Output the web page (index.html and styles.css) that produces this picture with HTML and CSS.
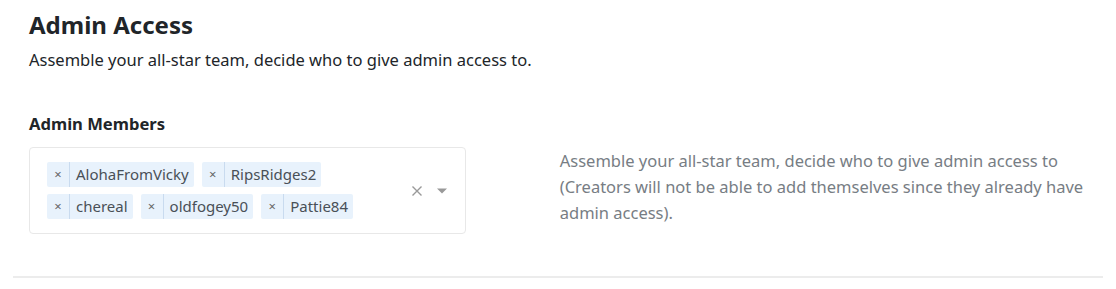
FILE: index.html
```html
<!DOCTYPE html>
<html lang="en">
<head>
    <meta charset="UTF-8">
    <meta name="viewport" content="width=device-width, initial-scale=1.0">
    <title>Admin Access</title>
    <link rel="stylesheet" href="styles.css">
</head>
<body>
    <div class="section">
        <h1>Admin Access</h1>
        <p class="subtitle">Assemble your all-star team, decide who to give admin access to.</p>

        <div class="field">
            <div class="field-main">
                <label class="field-label">Admin Members</label>
                <div class="select">
                    <div class="tags">
                        <span class="tag"><span class="tag-remove">&times;</span><span class="tag-label">AlohaFromVicky</span></span>
                        <span class="tag"><span class="tag-remove">&times;</span><span class="tag-label">RipsRidges2</span></span>
                        <span class="tag"><span class="tag-remove">&times;</span><span class="tag-label">chereal</span></span>
                        <span class="tag"><span class="tag-remove">&times;</span><span class="tag-label">oldfogey50</span></span>
                        <span class="tag"><span class="tag-remove">&times;</span><span class="tag-label">Pattie84</span></span>
                    </div>
                    <div class="indicators">
                        <svg class="clear-icon" width="12" height="12" viewBox="0 0 12 12">
                            <path d="M1.5 1.5 L10.5 10.5 M10.5 1.5 L1.5 10.5" stroke="#999" stroke-width="1.4" fill="none"/>
                        </svg>
                        <svg class="arrow-icon" width="12" height="8" viewBox="0 0 12 8">
                            <path d="M1 1.5 L11 1.5 L6 6.5 Z" fill="#999"/>
                        </svg>
                    </div>
                </div>
            </div>
            <p class="field-help">Assemble your all-star team, decide who to give admin access to (Creators will not be able to add themselves since they already have admin access).</p>
        </div>

        <hr class="divider">
    </div>
</body>
</html>
```

FILE: styles.css
```css
body {
    margin: 0;
    font-family: "Noto Sans", "Open Sans", sans-serif;
    color: #212529;
    background-color: #fff;
}

.section {
    padding: 8px 13px 0 13px;
}

h1 {
    margin: 0 16px;
    font-size: 24px;
    font-weight: 700;
    line-height: 34px;
}

.subtitle {
    margin: 6px 16px 0 16px;
    font-size: 16.5px;
    line-height: 24px;
}

.field {
    display: flex;
    margin: 40px 16px 0 16px;
}

.field-main {
    width: 439px;
}

.field-label {
    display: block;
    font-size: 16.6px;
    font-weight: 700;
    line-height: 24px;
    margin-bottom: 11px;
}

.select {
    display: flex;
    align-items: center;
    border: 1px solid #e8e8e8;
    border-radius: 4px;
    padding: 14px 16px 14px 17px;
}

.tags {
    flex: 1;
    display: flex;
    flex-wrap: wrap;
    gap: 7px 8px;
    max-width: 320px;
}

.tag {
    display: flex;
    align-items: stretch;
    background-color: #e8f2fc;
    border-radius: 2px;
    font-size: 15px;
    line-height: 25px;
    color: #495057;
}

.tag-remove {
    width: 22px;
    text-align: center;
    font-size: 13px;
    color: #666;
    border-right: 1px solid #c9dbef;
}

.tag-label {
    padding: 0 5px 0 6px;
}

.indicators {
    display: flex;
    align-items: center;
    gap: 13px;
    margin-left: auto;
    padding-right: 1px;
}

.field-help {
    margin: 0 0 0 94px;
    padding-top: 36px;
    width: 530px;
    font-size: 16.5px;
    line-height: 26px;
    color: #777d84;
}

.divider {
    margin: 42px 0 0 0;
    border: none;
    height: 2px;
    background-color: #ececec;
}
```
